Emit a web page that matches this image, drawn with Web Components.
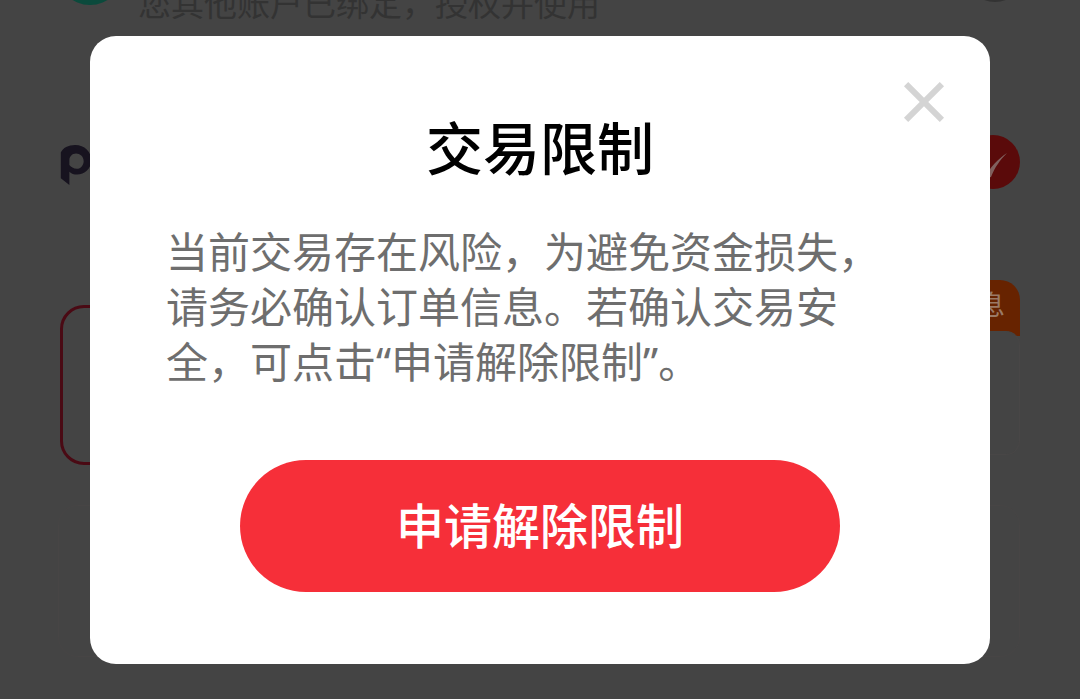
<!DOCTYPE html>
<html lang="zh-CN"><head><meta charset="utf-8"><title>交易限制</title>
<style>
html,body{margin:0;height:699px;overflow:hidden;background:#444}
body{font-family:"Noto Sans","Noto Sans CJK SC",sans-serif}
</style></head><body>
<template id="t-page"><style>
:host{display:flex;flex-direction:column;height:699px;box-sizing:border-box;padding:0 60px;background:#444;overflow:hidden}
.top{display:flex;align-items:flex-end;height:26px;flex:none}
.ava{width:66px;height:66px;border-radius:50%;background:#0b4a3c;margin:0 0 21px -3px;flex:none}
.sub{margin-left:15px;font-size:33px;line-height:44px;color:#333;flex:1;white-space:nowrap}
.dot{width:60px;height:60px;border-radius:50%;background:#333;margin:0 -5px 24px 0;flex:none}
.brand{display:flex;justify-content:space-between;align-items:center;margin-top:109px;height:54px;flex:none}
.logo{width:34px;height:40px;display:block;margin-top:6px}
.seal{width:54px;height:54px;display:block}
.row{display:flex;justify-content:space-between;align-items:flex-start;margin-top:91px;height:185px;flex:none}
.sel{margin-top:25px;width:480px;height:160px;box-sizing:border-box;border:3px solid #4a0a14;border-radius:24px;flex:none}
.side{width:300px;flex:none;display:flex;flex-direction:column;align-items:flex-end}
.tag{width:80px;height:56px;box-sizing:border-box;background:#672300;border-radius:20px 20px 0 0;color:#9a7a66;font-size:27px;line-height:50px;text-align:right;padding-right:15px;flex:none}
.info{margin-top:-5px;width:300px;height:124px;box-sizing:border-box;background:#444;border:1px solid #484646;border-top-color:#444;border-radius:14px;flex:none}
.low{margin-top:40px;height:150px;border:1px solid #474545;border-radius:20px;flex:none;margin-left:-2px}
</style>
<div class="top"><span class="ava"></span><span class="sub">您其他账户已绑定，授权并使用</span><span class="dot"></span></div>
<div class="brand">
<svg class="logo" viewBox="0 0 34 42"><path fill="#17131f" d="M0 8C2 3 8 0 15 0c10 0 17 7 17 16 0 9-7 15-15 15-3 0-6-1-8-3v-7c2 2 4 4 8 4 4 0 7-4 7-8 0-5-4-8-8-8-4 0-7 3-7 7v26L0 35z"/></svg>
<svg class="seal" viewBox="0 0 54 54"><circle cx="27" cy="27" r="27" fill="#5a0a0a"/><path d="M18 44C24 32 32 24 41 18 34 25 29 32 25 42z" fill="#80605e"/></svg>
</div>
<div class="row"><div class="sel"></div><div class="side"><div class="tag">息</div><div class="info"></div></div></div>
<div class="low"></div>
</template>

<template id="t-close"><style>
:host{display:block;width:42px;height:42px}
svg{display:block;width:42px;height:42px}
</style><svg viewBox="0 0 42 42"><path d="M3.1 3.1l35.8 35.8M38.9 3.1L3.1 38.9" stroke="#d4d4d4" stroke-width="6" fill="none"/></svg></template>

<template id="t-button"><style>
:host{display:flex;align-items:center;justify-content:center;width:600px;height:132px;border-radius:66px;background:#f62f39;color:#fff;font-size:48px;font-weight:500;line-height:1;box-sizing:border-box}
</style><slot></slot></template>

<template id="t-dialog"><style>
:host{position:absolute;left:90px;top:36px;width:900px;height:628px;box-sizing:border-box;background:#fff;border-radius:26px;display:flex;flex-direction:column;align-items:center;padding-top:74px}
.x{position:absolute;top:45px;right:45px}
.title{font-size:57px;font-weight:500;line-height:76px;color:#000;height:76px;margin:0}
.body{align-self:flex-start;margin:38px 0 0 76px;font-size:42px;line-height:55px;color:#6e6e6e;white-space:nowrap}
::slotted(app-button){margin-top:71px}
</style>
<span class="x"><slot name="close"></slot></span>
<h2 class="title"><slot name="title"></slot></h2>
<div class="body"><slot name="body"></slot></div>
<slot></slot></template>

<app-page></app-page>
<app-dialog>
<app-close slot="close"></app-close>
<span slot="title">交易限制</span>
<span slot="body">当前交易存在风险，为避免资金损失，<br>请务必确认订单信息。若确认交易安<br>全，可点击“申请解除限制”。</span>
<app-button>申请解除限制</app-button>
</app-dialog>
<script>
for(const [tag,id] of [['app-page','t-page'],['app-close','t-close'],['app-button','t-button'],['app-dialog','t-dialog']]){
customElements.define(tag,class extends HTMLElement{constructor(){super();this.attachShadow({mode:'open'}).appendChild(document.getElementById(id).content.cloneNode(true));}});
}
</script>
</body></html>
